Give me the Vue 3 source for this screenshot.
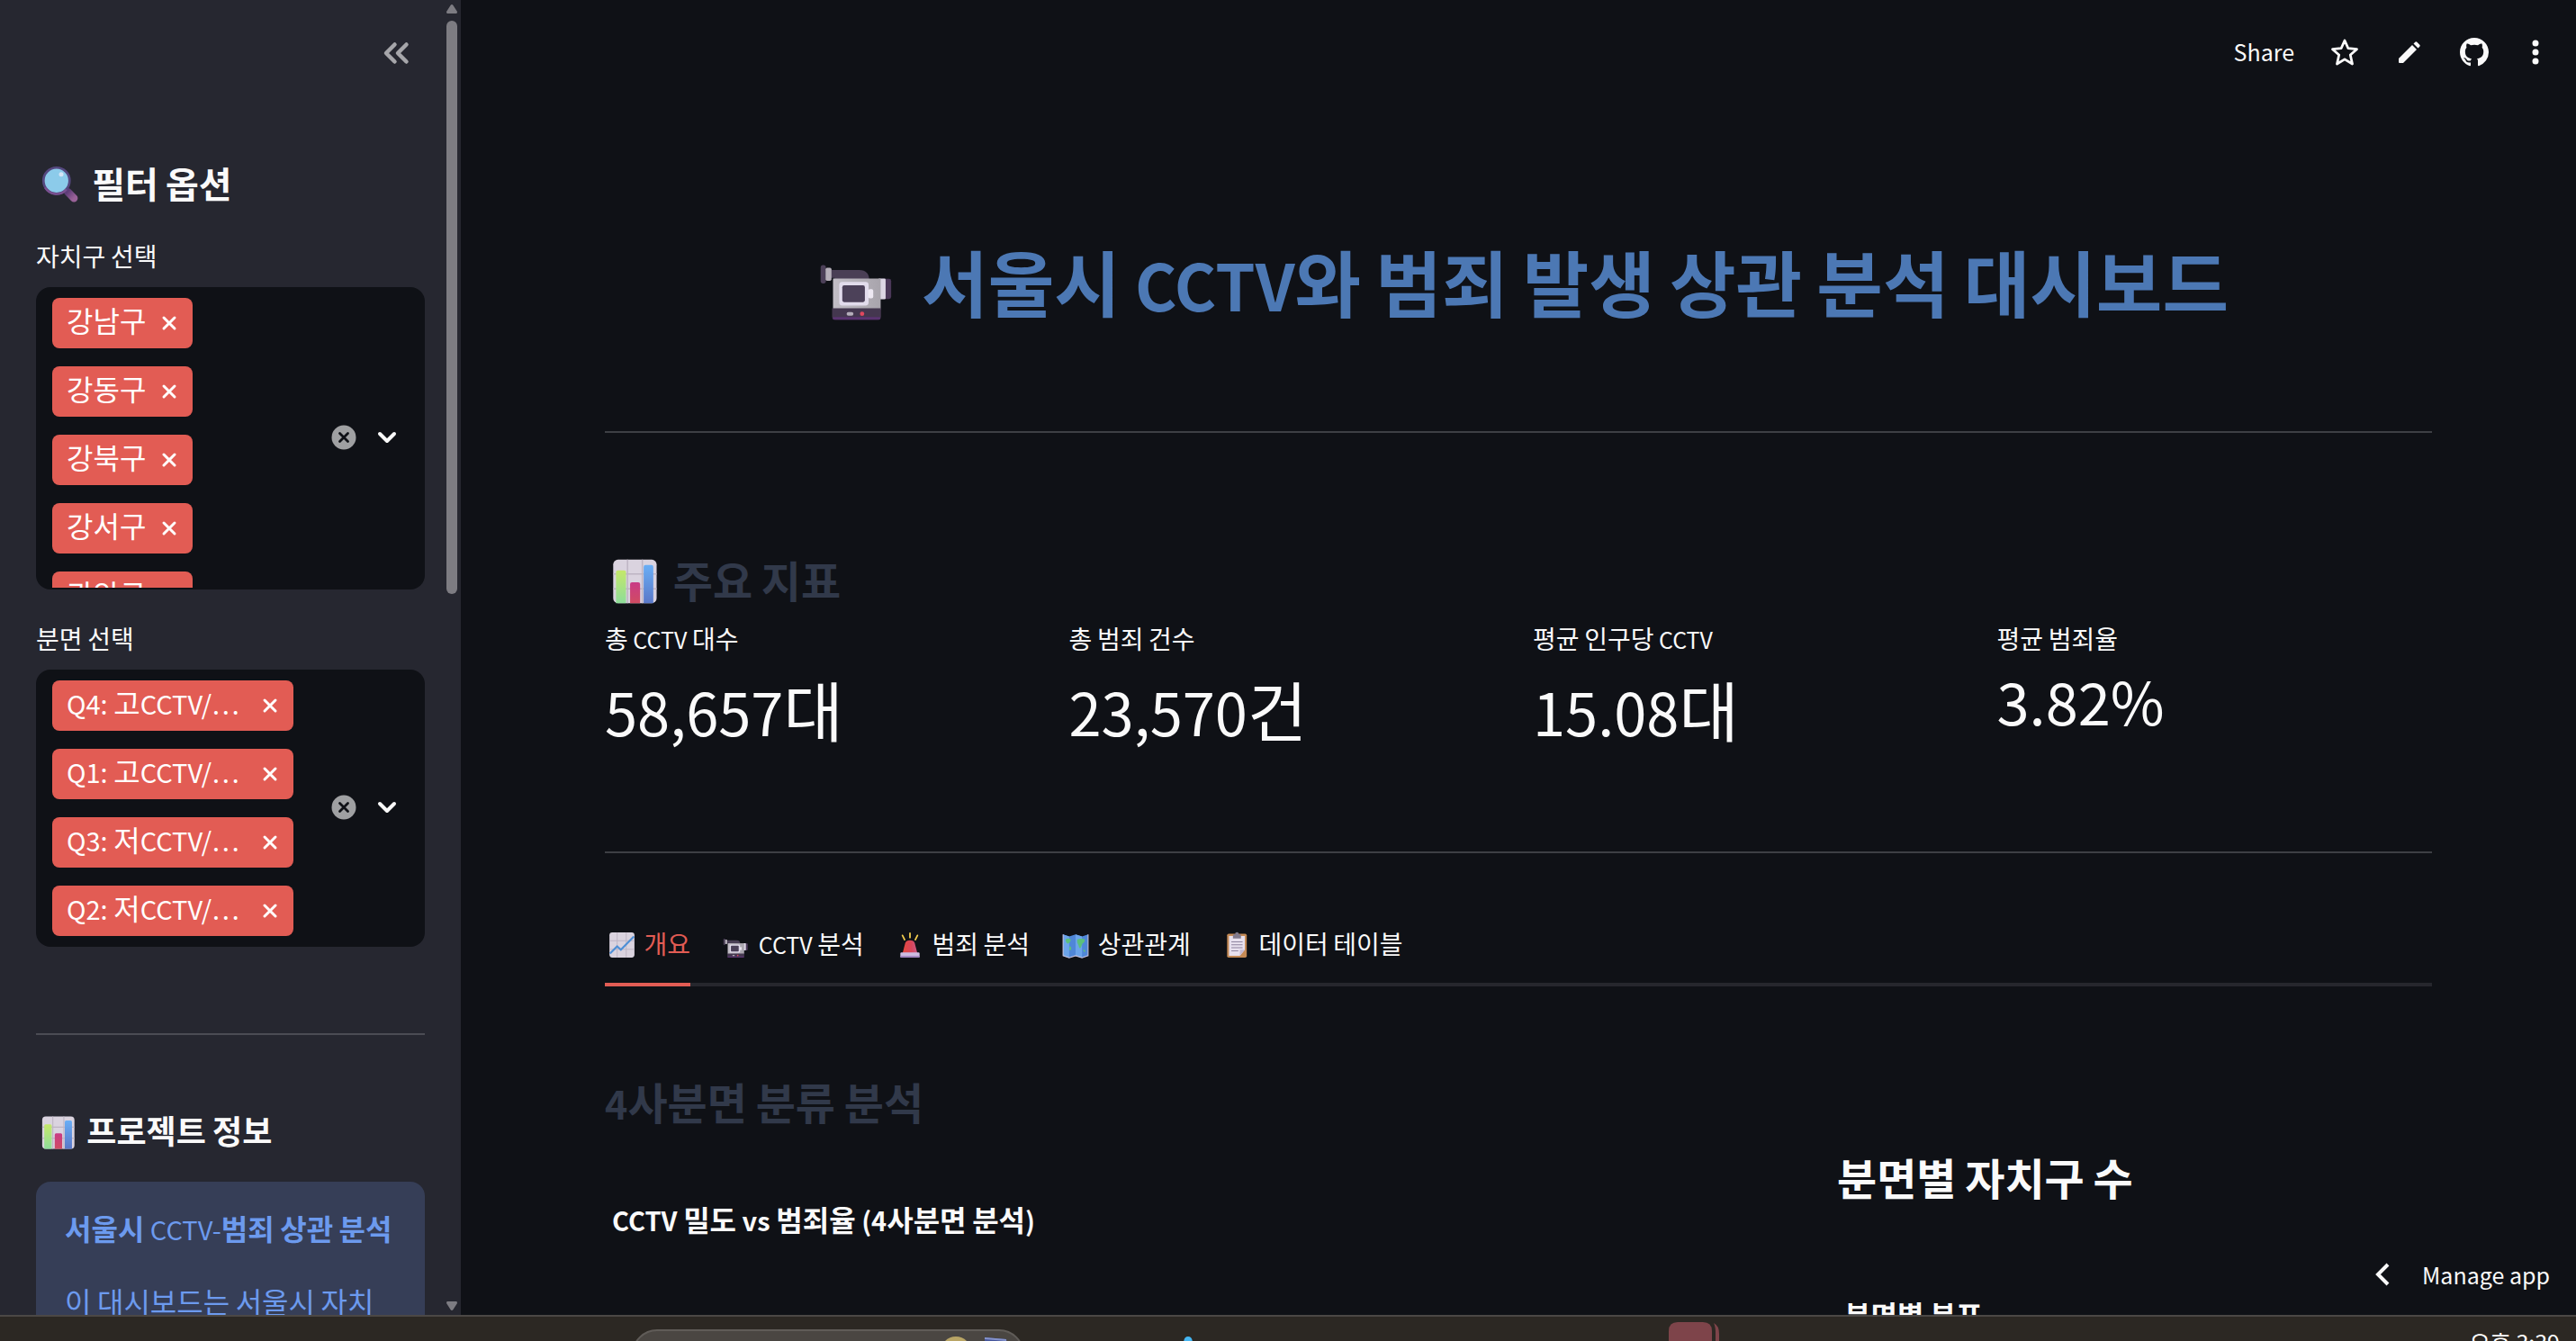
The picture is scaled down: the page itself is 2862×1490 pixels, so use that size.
<template>
  <div class="screen">
    <!-- Shared emoji artwork -->
    <svg class="sprite" aria-hidden="true">
      <defs>
        <linearGradient id="g-lime" x1="0" y1="0" x2="0" y2="1">
          <stop offset="0%" stop-color="#C5E86A" />
          <stop offset="100%" stop-color="#8EDD9A" />
        </linearGradient>
        <linearGradient id="g-pink" x1="0" y1="0" x2="0" y2="1">
          <stop offset="0%" stop-color="#C93A86" />
          <stop offset="100%" stop-color="#D04C62" />
        </linearGradient>
        <linearGradient id="g-blue" x1="0" y1="0" x2="0" y2="1">
          <stop offset="0%" stop-color="#6AAEF5" />
          <stop offset="100%" stop-color="#5A78C8" />
        </linearGradient>
        <linearGradient id="g-handle" x1="0" y1="0" x2="1" y2="1">
          <stop offset="0%" stop-color="#5E3C78" />
          <stop offset="100%" stop-color="#9A6298" />
        </linearGradient>
        <linearGradient id="g-body" x1="0" y1="0" x2="1" y2="0">
          <stop offset="0%" stop-color="#C2BEC6" />
          <stop offset="100%" stop-color="#A8A4AC" />
        </linearGradient>
        <linearGradient id="g-siren" x1="0" y1="0" x2="1" y2="0">
          <stop offset="0%" stop-color="#E4483C" />
          <stop offset="60%" stop-color="#D8455A" />
          <stop offset="100%" stop-color="#C85A86" />
        </linearGradient>
      </defs>

      <symbol id="search" viewBox="0 0 32 32">
        <path d="M20.8 20.8 L25 25" stroke="url(#g-handle)" stroke-width="5" stroke-linecap="round" />
        <circle cx="13.5" cy="13.5" r="8.6" fill="#8CCBEA" stroke="#55487F" stroke-width="1.6" />
        <path d="M6 18 A8.6 8.6 0 0 0 20 19.2" stroke="#7A5090" stroke-width="1.4" fill="none" />
        <circle cx="16.6" cy="9.3" r="1.5" fill="#D5E4F6" />
      </symbol>

      <symbol id="bars" viewBox="0 0 32 32">
        <rect x="4.5" y="4.3" width="23.4" height="23.4" rx="2.6" fill="#DAD3DF" />
        <path d="M12.2 4.3 V27.7 M20.2 4.3 V27.7 M4.5 12 H27.9 M4.5 20 H27.9" stroke="#BDB4C3" stroke-width="0.7" />
        <path d="M6 11 Q6 10 7 10 H10.4 Q11.4 10 11.4 11 V27.7 H6Z" fill="url(#g-lime)" />
        <path d="M13.6 17.5 Q13.6 16.5 14.6 16.5 H18 Q19 16.5 19 17.5 V27.7 H13.6Z" fill="url(#g-pink)" />
        <path d="M20.9 8.2 Q20.9 7.2 21.9 7.2 H25.1 Q26.1 7.2 26.1 8.2 V27.7 H20.9Z" fill="url(#g-blue)" />
      </symbol>

      <symbol id="camera" viewBox="0 0 32 32">
        <path d="M7 11.6 H16.5 Q19.7 11.6 19.7 15 H8.5 V14.2 H7Z" fill="#4A3F55" />
        <rect x="4" y="10" width="1.7" height="6" rx="0.8" fill="#4C4058" />
        <rect x="5.6" y="10.9" width="1.9" height="4.2" rx="0.5" fill="#B6B0BA" />
        <rect x="23" y="14.5" width="3.8" height="6.5" rx="0.7" fill="#4A3858" />
        <rect x="22.6" y="14.4" width="2.4" height="6.7" rx="0.4" fill="#DCD6E4" />
        <path d="M8 14.4 H23.4 V24.5 H8Z" fill="url(#g-body)" />
        <rect x="10" y="15.5" width="9.5" height="7.6" rx="1" fill="#E2DCEC" />
        <rect x="11" y="16.6" width="7.3" height="5.4" rx="0.6" fill="#4C4159" />
        <rect x="19.4" y="17.8" width="1.6" height="3" rx="0.5" fill="#EDE8F2" />
        <path d="M7.7 24 H23.5 V26.6 Q23.5 27.7 22.4 27.7 H8.8 Q7.7 27.7 7.7 26.6Z" fill="#44374F" />
        <rect x="7.9" y="26.8" width="15.4" height="0.9" rx="0.4" fill="#5A3470" />
        <rect x="12.4" y="25.2" width="2.2" height="1.2" rx="0.6" fill="#B5AEBB" />
        <circle cx="17.4" cy="25.8" r="0.7" fill="#E0485F" />
      </symbol>

      <symbol id="trend" viewBox="0 0 32 32">
        <rect x="4.3" y="4.3" width="23.4" height="23.4" rx="2.6" fill="#DAD3DF" />
        <path d="M11.5 4.3 V27.7 M20 4.3 V27.7 M4.3 12 H27.7 M4.3 20 H27.7" stroke="#BDB4C3" stroke-width="0.8" />
        <path d="M4.8 24 L11.5 17.2 L15 20.5 L27.2 8" stroke="#4E8FD6" stroke-width="1.8" fill="none" />
      </symbol>

      <symbol id="siren" viewBox="0 0 32 32">
        <path d="M16 5 V9 M9 7 L11 11 M23 7 L21 11" stroke="#F4CE4E" stroke-width="1.5" stroke-linecap="round" />
        <path d="M9 24 L11.6 14.2 Q12.4 11.5 16 11.5 Q19.6 11.5 20.4 14.2 L23 24Z" fill="url(#g-siren)" />
        <rect x="7" y="23" width="18" height="4.8" rx="1" fill="#CDBCE2" />
        <rect x="7" y="26" width="18" height="1.8" rx="0.8" fill="#A58AC4" />
      </symbol>

      <symbol id="map" viewBox="0 0 32 32">
        <path d="M4.3 6 L10 8 L16 6 L22 8 L27.7 6 V26 L22 28 L16 26 L10 28 L4.3 26Z" fill="#4F87D8" />
        <path d="M4.3 6 L10 8 V28 L4.3 26Z M16 6 L22 8 V28 L16 26Z" fill="#6BA4EA" />
        <path d="M6.500 11 Q9 9 11.500 10.800 Q11.500 13.500 9 14.800 Q7 14.500 6.500 11Z M10.500 17 Q12.500 17.500 11.800 20.500 Q10.500 22 10 20Z" fill="#5CC07C" />
        <path d="M17.500 11 Q20 9.500 24.500 10.500 Q25 13.500 22.500 14.500 L21 18 Q19.500 20.500 18.800 16.500 Q16.800 14 17.500 11Z M23 20.500 Q25 19.800 25 22 Q24 23.500 23 20.500Z" fill="#5CC07C" />
        <path d="M4.3 6 V26 L10 28 L16 26 L22 28 L27.7 26 V6" stroke="#C7C2DD" stroke-width="0.9" fill="none" />
      </symbol>

      <symbol id="clipboard" viewBox="0 0 32 32">
        <rect x="7" y="5.400" width="18.400" height="22.400" rx="1.500" fill="#C48A55" />
        <path d="M8.800 7.500 H23.600 V20.500 L19 26 H8.800Z" fill="#E8E1EE" />
        <path d="M23.600 20.500 L19 26 V20.500Z" fill="#C6BBD2" />
        <path d="M11 13 H21.500 M11 15.800 H21.500 M11 18.600 H21.500 M11 21.400 H17.500" stroke="#8E84A0" stroke-width="0.9" />
        <path d="M12.500 9.800 V7 Q12.500 6 13.500 6 H14.500 Q14.500 4 16.200 4 Q18 4 18 6 H19 Q20 6 20 7 V9.800Z" fill="#817A8C" />
      </symbol>
    </svg>

    <div class="app">
      <aside class="sidebar">
        <div class="sidebar-content">
          <div class="sidebar-header">
            <button class="icon-button collapse" aria-label="Collapse sidebar">
              <svg viewBox="0 0 40 40" width="40" height="40" fill="none" stroke="currentColor" stroke-width="4.500" stroke-linecap="round" stroke-linejoin="round">
                <path d="M18.500 10.500 L9 20 L18.500 29.500 M31.500 10.500 L22 20 L31.500 29.500" />
              </svg>
            </button>
          </div>

          <h2 class="side-title">
            <svg class="emoji"><use href="#search" /></svg>
            <span class="text"><span v-for="(r, i) in runs(' 필터 옵션')" :key="i" :class="{ latin: r.latin }">{{ r.text }}</span></span>
          </h2>

          <section v-for="f in filters" :key="f.id" class="filter">
            <label :id="f.id" class="field-label"><span v-for="(r, i) in runs(f.label)" :key="i" :class="{ latin: r.latin }">{{ r.text }}</span></label>
            <div class="multiselect" role="group" :aria-labelledby="f.id">
              <div class="tags">
                <span v-for="t in f.tags" :key="t" class="tag">
                  <span class="tag-text" :class="{ wide: f.truncated }"><span v-for="(r, i) in runs(t)" :key="i" :class="{ latin: r.latin }">{{ r.text }}</span></span>
                  <button class="icon-button" :aria-label="'Remove ' + t">
                    <svg viewBox="0 0 20 20" width="20" height="20" stroke="currentColor" stroke-width="3" stroke-linecap="round">
                      <path d="M4 4 L16 16 M16 4 L4 16" />
                    </svg>
                  </button>
                </span>
              </div>
              <button class="icon-button" aria-label="Clear all">
                <svg viewBox="0 0 28 28" width="28" height="28">
                  <circle cx="14" cy="14" r="13.500" fill="#9FA0A2" />
                  <path d="M9.500 9.500 L18.500 18.500 M18.500 9.500 L9.500 18.500" stroke="#0F1116" stroke-width="2.800" stroke-linecap="round" />
                </svg>
              </button>
              <button class="icon-button" aria-label="Open">
                <svg viewBox="0 0 24 24" width="24" height="24" fill="none" stroke="currentColor" stroke-width="4" stroke-linecap="round" stroke-linejoin="round">
                  <path d="M4 8 L12 16 L20 8" />
                </svg>
              </button>
            </div>
          </section>

          <hr class="side-rule" />

          <h3 class="info-title">
            <svg class="emoji"><use href="#bars" /></svg>
            <span class="text"><span v-for="(r, i) in runs(' 프로젝트 정보')" :key="i" :class="{ latin: r.latin }">{{ r.text }}</span></span>
          </h3>
          <div class="info">
            <p class="info-name"><span v-for="(r, i) in runs('서울시 CCTV-범죄 상관 분석')" :key="i" :class="{ latin: r.latin }">{{ r.text }}</span></p>
            <p><span v-for="(r, i) in runs('이 대시보드는 서울시 자치')" :key="i" :class="{ latin: r.latin }">{{ r.text }}</span></p>
          </div>
        </div>

        <div class="scrollbar" aria-hidden="true">
          <svg viewBox="0 0 12 10" width="12" height="10"><path d="M6 0 Q7 0 7.500 1 L12 8 Q12 10 11 10 H1 Q0 10 0 8 L4.500 1 Q5 0 6 0Z" fill="#7D7C82" /></svg>
          <div class="track"><div class="thumb"></div></div>
          <svg viewBox="0 0 12 10" width="12" height="10"><path d="M6 10 Q7 10 7.500 9 L12 2 Q12 0 11 0 H1 Q0 0 0 2 L4.500 9 Q5 10 6 10Z" fill="#7D7C82" /></svg>
        </div>
      </aside>

      <main class="main">
        <header class="toolbar">
          <button class="share">Share</button>
          <button class="icon-button" aria-label="Favorite">
            <svg viewBox="0 0 32 32" width="32" height="32" fill="none" stroke="currentColor" stroke-width="2.800" stroke-linejoin="round">
              <path d="M16 3 L19.900 11.700 L29.500 12.700 L22.300 19 L24.500 29 L16 23.900 L7.500 29 L9.700 19 L2.500 12.700 L12.100 11.700Z" />
            </svg>
          </button>
          <button class="icon-button" aria-label="Edit">
            <svg viewBox="0 0 32 32" width="32" height="32" fill="currentColor">
              <path d="M4 23 L19 8 L24 13 L9 28 H5 Q4 28 4 27Z" />
              <path d="M20.500 6.500 L22.300 4.700 Q23.300 3.700 24.300 4.700 L27.300 7.700 Q28.300 8.700 27.300 9.700 L25.500 11.500Z" />
            </svg>
          </button>
          <button class="icon-button" aria-label="View on GitHub">
            <svg viewBox="0 0 16 16" width="32" height="32" fill="currentColor">
              <path d="M8 0C3.580 0 0 3.580 0 8c0 3.540 2.290 6.530 5.470 7.590.4.070.55-.17.55-.38 0-.19-.01-.82-.01-1.490-2.010.37-2.530-.49-2.690-.94-.09-.23-.48-.94-.82-1.130-.28-.15-.68-.52-.01-.53.63-.01 1.080.58 1.230.82.72 1.210 1.870.87 2.330.66.07-.52.28-.87.51-1.070-1.780-.2-3.640-.89-3.640-3.950 0-.87.31-1.590.82-2.150-.08-.2-.36-1.020.08-2.120 0 0 .67-.21 2.200.82.64-.18 1.320-.27 2-.27s1.360.09 2 .27c1.530-1.040 2.200-.82 2.200-.82.44 1.100.16 1.920.08 2.120.51.56.82 1.270.82 2.150 0 3.070-1.870 3.750-3.650 3.950.29.25.54.73.54 1.480 0 1.070-.01 1.930-.01 2.200 0 .21.15.46.55.38A8.010 8.010 0 0 0 16 8c0-4.420-3.580-8-8-8z" />
            </svg>
          </button>
          <button class="icon-button dots" aria-label="Menu">
            <svg viewBox="0 0 8 28" width="8" height="28" fill="currentColor">
              <circle cx="4" cy="4" r="3.500" />
              <circle cx="4" cy="14" r="3.500" />
              <circle cx="4" cy="24" r="3.500" />
            </svg>
          </button>
        </header>

        <div class="content">
          <h1 class="page-title">
            <svg class="emoji"><use href="#camera" /></svg>
            <span class="text"><span v-for="(r, i) in runs(' 서울시 CCTV와 범죄 발생 상관 분석 대시보드')" :key="i" :class="{ latin: r.latin }">{{ r.text }}</span></span>
          </h1>
          <hr class="rule" />

          <h2 class="metrics-title">
            <svg class="emoji"><use href="#bars" /></svg>
            <span class="text"><span v-for="(r, i) in runs(' 주요 지표')" :key="i" :class="{ latin: r.latin }">{{ r.text }}</span></span>
          </h2>
          <div class="metrics">
            <div v-for="m in metrics" :key="m.label">
              <div class="metric-label"><span v-for="(r, i) in runs(m.label)" :key="i" :class="{ latin: r.latin }">{{ r.text }}</span></div>
              <div class="metric-value"><span class="latin">{{ m.value }}</span><span v-if="m.unit" class="unit">{{ m.unit }}</span></div>
            </div>
          </div>
          <hr class="rule" />

          <div class="tabs" role="tablist">
            <button v-for="t in tabs" :key="t.label" class="tab" :class="{ active: t.label === active }" role="tab" :aria-selected="t.label === active" @click="active = t.label">
              <svg class="emoji"><use :href="'#' + t.icon" /></svg>
              <span class="text"><span v-for="(r, i) in runs(' ' + t.label)" :key="i" :class="{ latin: r.latin }">{{ r.text }}</span></span>
            </button>
          </div>

          <h3 class="section-title"><span v-for="(r, i) in runs('4사분면 분류 분석')" :key="i" :class="{ latin: r.latin }">{{ r.text }}</span></h3>
          <div class="columns">
            <section class="scatter">
              <h4 class="chart-title"><span v-for="(r, i) in runs('CCTV 밀도 vs 범죄율 (4사분면 분석)')" :key="i" :class="{ latin: r.latin }">{{ r.text }}</span></h4>
            </section>
            <section class="counts">
              <h3 class="counts-title"><span v-for="(r, i) in runs('분면별 자치구 수')" :key="i" :class="{ latin: r.latin }">{{ r.text }}</span></h3>
              <h4 class="chart-title"><span v-for="(r, i) in runs('분면별 분포')" :key="i" :class="{ latin: r.latin }">{{ r.text }}</span></h4>
            </section>
          </div>
        </div>

        <button class="manage">
          <svg viewBox="0 0 16 26" width="16" height="26" fill="none" stroke="currentColor" stroke-width="4">
            <path d="M14 2 L3 13 L14 24" />
          </svg>
          Manage app
        </button>
      </main>
    </div>

    <!-- Windows taskbar edge -->
    <footer class="taskbar">
      <div class="search-pill">
        <svg viewBox="0 0 90 12" width="90" height="12">
          <circle cx="16" cy="18" r="17" fill="#B9A565" />
          <path d="M48 2 L72 4 L74 12 H48Z" fill="#46569A" />
          <path d="M48 2 L72 4 V6 L48 4Z" fill="#8593CC" />
        </svg>
      </div>
      <svg class="pin" viewBox="0 0 12 8" width="12" height="8"><path d="M1 8 Q1 0 6 0 Q11 0 11 8Z" fill="#45B6F2" /></svg>
      <svg class="pinned-app" viewBox="0 0 58 24" width="58" height="24">
        <path d="M0 24 V10 Q0 0 10 0 H38 Q48 0 48 10 V24Z" fill="#7E444A" />
        <path d="M50 1 Q56 4 56 13 V24 H52 V12 Q52 5 50 1Z" fill="#7E444A" />
      </svg>
      <time class="clock">오후 3:39</time>
    </footer>
  </div>
</template>

<script setup>
import { ref } from 'vue'

const filters = [
  { id: 'district', label: '자치구 선택', tags: ['강남구', '강동구', '강북구', '강서구', '관악구'] },
  {
    id: 'quadrant',
    label: '분면 선택',
    truncated: true,
    tags: ['Q4: 고CCTV/…', 'Q1: 고CCTV/…', 'Q3: 저CCTV/…', 'Q2: 저CCTV/…']
  }
]

const metrics = [
  { label: '총 CCTV 대수', value: '58,657', unit: '대' },
  { label: '총 범죄 건수', value: '23,570', unit: '건' },
  { label: '평균 인구당 CCTV', value: '15.08', unit: '대' },
  { label: '평균 범죄율', value: '3.82%' }
]

const tabs = [
  { icon: 'trend', label: '개요' },
  { icon: 'camera', label: 'CCTV 분석' },
  { icon: 'siren', label: '범죄 분석' },
  { icon: 'map', label: '상관관계' },
  { icon: 'clipboard', label: '데이터 테이블' }
]
const active = ref('개요')

// Split a string into Hangul and non-Hangul runs, Latin is set a bit smaller
function runs(text) {
  return text.match(/[가-힣]+|[^가-힣]+/g).map(s => ({ text: s, latin: !/[가-힣]/.test(s) }))
}
</script>

<style>
body {
  background: #0f1116;
}
</style>

<style scoped>
.screen {
  display: flex;
  flex-direction: column;
  height: 100vh;
  overflow: hidden;
  background: #0f1116;
  color: #fafafa;
  font-family: "Noto Sans CJK KR", "Noto Sans", sans-serif;
  font-size: 28px;
}
.screen * { box-sizing: border-box; }
.sprite { position: absolute; width: 0; height: 0; }
.app { display: flex; flex: 1; min-height: 0; }

h1, h2, h3, h4, p, hr { margin: 0; }
button {
  font: inherit;
  color: inherit;
  background: none;
  border: 0;
  padding: 0;
  cursor: pointer;
}
.icon-button { display: flex; flex: none; }
.latin { font-size: var(--latin, 25px); }
.text { padding-bottom: 4px; white-space: pre; }
.emoji { flex: none; width: var(--emoji); height: var(--emoji); }

/* Sidebar */
.sidebar {
  display: flex;
  flex: none;
  width: 512px;
  background: #262730;
}
.sidebar-content {
  flex: 1;
  min-width: 0;
  padding: 0 24px 0 40px;
  overflow: hidden;
}
.sidebar-header {
  display: flex;
  align-items: center;
  justify-content: flex-end;
  height: 118px;
  padding-right: 12px;
}
.collapse { color: #a6a6aa; }
.side-title {
  --emoji: 54px;
  --latin: 36px;
  display: flex;
  align-items: center;
  margin-top: 60px;
  font-size: 40px;
  line-height: 48px;
}
.filter { margin-top: 34px; }
.side-title + .filter { margin-top: 32px; }
.field-label {
  display: block;
  margin-bottom: 14px;
  line-height: 40px;
}
.multiselect {
  display: flex;
  align-items: center;
  gap: 22px;
  max-height: 336px;
  padding: 0 30px 2px 18px;
  border-radius: 16px;
  background: #0f1116;
  overflow: hidden;
}
.tags {
  display: flex;
  flex: 1;
  flex-direction: column;
  align-items: flex-start;
  gap: 20px;
  max-height: 334px;
  padding: 12px 0 10px;
  overflow: hidden;
}
.tag {
  --latin: 29px;
  display: flex;
  flex: none;
  align-items: center;
  gap: 16px;
  height: 56px;
  padding: 0 16px;
  border-radius: 8px;
  background: #e25c54;
  color: #fff;
  font-size: 32px;
  line-height: 48px;
}
.tag-text { padding-bottom: 8px; white-space: nowrap; }
.tag-text.wide { width: 200px; }
.side-rule, .rule {
  height: 2px;
  border: 0;
  background: #4b4c54;
}
.side-rule { margin-top: 96px; }
.rule { background: #3d3f44; }
.info-title {
  --emoji: 49px;
  --latin: 32px;
  display: flex;
  align-items: center;
  margin-top: 83px;
  font-size: 36px;
  line-height: 44px;
}
.info {
  --latin: 29px;
  display: flex;
  flex-direction: column;
  gap: 28px;
  margin-top: 30px;
  padding: 25px 32px;
  border-radius: 16px;
  background: #363e57;
  color: #6c9aee;
  font-size: 32px;
  line-height: 52px;
  white-space: nowrap;
}
.info-name { font-weight: 700; }
.info-name .latin { font-weight: 400; }

.scrollbar {
  display: flex;
  flex: none;
  flex-direction: column;
  gap: 8px;
  width: 16px;
  padding: 5px 0;
}
.track { flex: 1; }
.thumb {
  width: 12px;
  height: 45%;
  border-radius: 6px;
  background: #7d7c82;
}

/* Main area */
.main {
  position: relative;
  flex: 1;
  min-width: 0;
  overflow: hidden;
}
.toolbar {
  display: flex;
  align-items: center;
  justify-content: flex-end;
  gap: 40px;
  height: 116px;
  padding-right: 41px;
}
.share { padding-bottom: 2px; font-size: 25px; }
.dots { margin-left: 8px; }
.content { padding: 144px 160px 0; }
.page-title {
  --emoji: 110px;
  --latin: 71px;
  display: flex;
  align-items: center;
  justify-content: center;
  color: #4c78b4;
  font-size: 80px;
  line-height: 96px;
}
.page-title + .rule { margin-top: 109px; }
.metrics-title {
  --emoji: 66px;
  --latin: 43px;
  display: flex;
  align-items: center;
  margin-top: 132px;
  color: #31394a;
  font-size: 48px;
  line-height: 58px;
}
.metrics {
  display: grid;
  grid-template-columns: repeat(4, 1fr);
  gap: 32px;
  margin-top: 10px;
}
.metric-label { line-height: 40px; }
.metric-value {
  --latin: 65px;
  height: 163px;
  margin-top: 5px;
  font-size: 72px;
  line-height: 80px;
}
.unit { line-height: 104px; }
.metrics + .rule { margin-top: 48px; }
.tabs {
  display: flex;
  gap: 32px;
  margin-top: 64px;
  border-bottom: 4px solid #26272d;
}
.tab {
  --emoji: 38px;
  display: flex;
  align-items: center;
  height: 84px;
  margin-bottom: -4px;
  padding-bottom: 4px;
  border-bottom: 4px solid transparent;
  line-height: 40px;
}
.tab.active {
  border-color: #e25c54;
  color: #e25c54;
}
.section-title {
  --latin: 43px;
  margin-top: 98px;
  color: #31394a;
  font-size: 48px;
  line-height: 58px;
}
.columns {
  display: grid;
  grid-template-columns: 2fr 1fr;
  gap: 32px;
}
.scatter { padding: 80px 8px 0; }
.counts { padding: 24px 5px 0; }
.counts-title {
  --latin: 43px;
  font-size: 48px;
  line-height: 58px;
}
.chart-title {
  --latin: 29px;
  font-size: 32px;
  line-height: 40px;
}
.counts .chart-title { margin: 102px 8px 0; }
.manage {
  position: absolute;
  right: 0;
  bottom: 0;
  display: flex;
  align-items: center;
  gap: 36px;
  height: 90px;
  padding: 0 29px;
  font-size: 25px;
}

/* Taskbar */
.taskbar {
  display: flex;
  flex: none;
  height: 29px;
  padding: 0 18px 0 702px;
  border-top: 2px solid #4b4845;
  background: #2c2823;
  overflow: hidden;
}
.search-pill {
  display: flex;
  justify-content: flex-end;
  width: 436px;
  height: 60px;
  margin-top: 14px;
  border: 2px solid #605c58;
  border-radius: 28px;
  background: #4a4642;
}
.search-pill svg { margin-top: 5px; }
.pin { margin: 22px 0 0 176px; }
.pinned-app { margin: 6px 0 0 528px; }
.clock {
  margin: 10px 0 0 auto;
  color: #fff;
  font-size: 25px;
  line-height: 36px;
}
</style>
